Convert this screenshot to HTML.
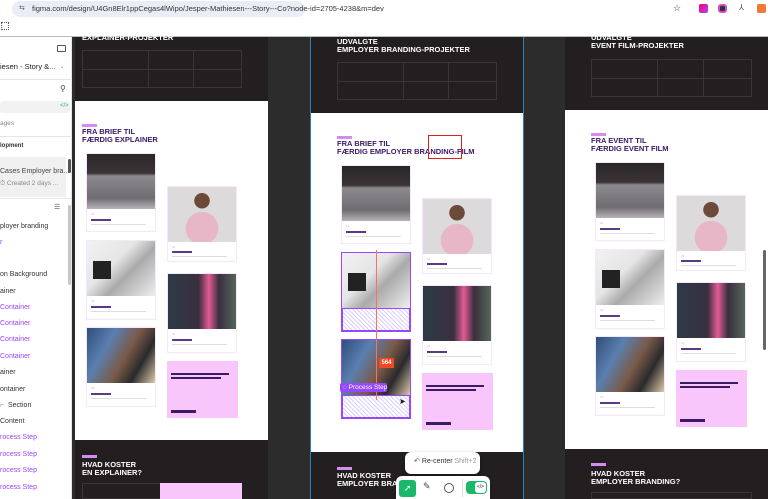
<!DOCTYPE html>
<html><head><meta charset="utf-8">
<style>
*{margin:0;padding:0;box-sizing:border-box}
body{width:768px;height:499px;overflow:hidden;position:relative;background:#2c2c2c;font-family:"Liberation Sans",sans-serif}
.a{position:absolute}
.lp div.t{position:absolute;left:0;font-size:7px;color:#333;white-space:nowrap}
.lp div.p{color:#9747ff}
.dk{background:#231f20}
.wh{background:#fff}
.tag{position:absolute;width:15px;height:3px;background:#d58cf0}
.ttl{position:absolute;font-weight:bold;font-size:7.5px;color:#3b1a66;line-height:8px;white-space:nowrap}
.card{position:absolute;width:70px;border:1px solid #f6e6fa;background:#fff}
.card .im{height:55px}
.card .n{position:absolute;left:4px;font-size:3px;color:#e6a6f5}
.card .h{position:absolute;left:4px;width:20px;height:1.5px;background:#5a3a86}
.card .l{position:absolute;left:4px;width:55px;height:1px;background:#ddd}
.pink{position:absolute;width:71px;height:57px;background:#f9c6fc}
.tbl{position:absolute;border:1px solid #3a3637;}
.ln{position:absolute;background:#3a3637}
.wt{position:absolute;color:#fff;font-weight:bold;font-size:7.5px;line-height:8px;white-space:nowrap}
</style></head><body>
<div class="a" style="left:0;top:0;width:768px;height:17px;background:#fff"></div>
<div class="a" style="left:12px;top:1px;width:293px;height:16px;border-radius:8px;background:#e9eef6"></div>
<div class="a" style="left:19px;top:4px;font-size:7px;color:#555">⇆</div>
<div class="a" style="left:32px;top:4px;font-size:7.5px;color:#333;white-space:nowrap">figma.com/design/U4Gn8Elr1ppCegas4lWipo/Jesper-Mathiesen---Story---Co?node-id=2705-4238&amp;m=dev</div>
<div class="a" style="left:673px;top:3px;font-size:9px;color:#444">☆</div>
<div class="a" style="left:699px;top:4px;width:9px;height:9px;background:linear-gradient(135deg,#f06,#a4f);border-radius:2px"></div>
<div class="a" style="left:718px;top:4px;width:9px;height:9px;border:2px solid #d34ccf;border-radius:3px;background:#333"></div>
<div class="a" style="left:739px;top:3px;font-size:8px;color:#555">⅄</div>
<div class="a" style="left:757px;top:4px;width:9px;height:9px;background:#f37835;border-radius:2px"></div>
<div class="a" style="left:0;top:17px;width:768px;height:20px;background:#fff;border-bottom:1px solid #bbb"></div>
<div class="a" style="left:1px;top:22px;width:8px;height:8px;border:1px dotted #555"></div>
<div class="a lp" style="left:0;top:37px;width:72px;height:462px;background:#fff;border-right:1px solid #e5e5e5">
  <div class="a" style="left:57px;top:8px;width:9px;height:7px;border:1px solid #555;border-radius:1px"></div>
  <div class="t" style="top:25px;font-size:7.5px;color:#222">iesen - Story &amp;...</div>
  <div class="a" style="left:60px;top:27px;font-size:5px;color:#666">⌄</div>
  <div class="a" style="left:0;top:42px;width:72px;height:1px;background:#e5e5e5"></div>
  <div class="a" style="left:60px;top:47px;font-size:8px;color:#444">⚲</div>
  <div class="a" style="left:0;top:64px;width:70px;height:12px;background:#f2f2f2;border-radius:3px"></div>
  <div class="a" style="left:60px;top:66px;font-size:6px;color:#1bb86a">&lt;/&gt;</div>
  <div class="t" style="top:83px;color:#888;font-size:6.5px">ages</div>
  <div class="a" style="left:0;top:99px;width:72px;height:1px;background:#e5e5e5"></div>
  <div class="t" style="top:106px;font-weight:bold;font-size:6px">lopment</div>
  <div class="a" style="left:0;top:120px;width:66px;height:40px;background:#f0f0f0"></div>
  <div class="t" style="top:131px;color:#444">Cases Employer bra...</div>
  <div class="t" style="top:143px;color:#888;font-size:6.5px">⏱ Created 2 days ...</div>
  <div class="a" style="left:68px;top:122px;width:3px;height:14px;background:#555;border-radius:2px"></div>
  <div class="a" style="left:0;top:161px;width:72px;height:1px;background:#e5e5e5"></div>
  <div class="a" style="left:54px;top:166px;font-size:7px;color:#555">☰</div>
  <div class="a" style="left:68px;top:168px;width:3px;height:80px;background:#c8c8c8;border-radius:2px"></div>
  <div class="t" style="top:186px">ployer branding</div>
  <div class="t p" style="top:202px">r</div>
  <div class="t" style="top:234px">on Background</div>
  <div class="t" style="top:251px">ainer</div>
  <div class="t p" style="top:267px">Container</div>
  <div class="t p" style="top:283px">Container</div>
  <div class="t p" style="top:299px">Container</div>
  <div class="t p" style="top:316px">Container</div>
  <div class="t" style="top:332px">ainer</div>
  <div class="t" style="top:349px">ontainer</div>
  <div class="t" style="top:365px;left:0"><span style="color:#888">⌐ </span>&nbsp;Section</div>
  <div class="t" style="top:381px">Content</div>
  <div class="t p" style="top:397px">rocess Step</div>
  <div class="t p" style="top:414px">rocess Step</div>
  <div class="t p" style="top:430px">rocess Step</div>
  <div class="t p" style="top:447px">rocess Step</div>
</div>

<div class="a dk" style="left:75px;top:37px;width:193px;height:64px"></div>
<div class="wt" style="left:82px;top:34px">EXPLAINER-PROJEKTER</div>
<div class="tbl" style="left:82px;top:50px;width:160px;height:38px"></div>
<div class="ln" style="left:148px;top:50px;width:1px;height:38px"></div>
<div class="ln" style="left:193px;top:50px;width:1px;height:38px"></div>
<div class="ln" style="left:82px;top:69px;width:160px;height:1px"></div>
<div class="a wh" style="left:75px;top:101px;width:193px;height:339px"></div>
<div class="a dk" style="left:75px;top:440px;width:193px;height:59px"></div>

<div class="a dk" style="left:311px;top:37px;width:212px;height:76px"></div>
<div class="wt" style="left:337px;top:38px">UDVALGTE<br>EMPLOYER BRANDING-PROJEKTER</div>
<div class="tbl" style="left:337px;top:62px;width:160px;height:38px"></div>
<div class="ln" style="left:403px;top:62px;width:1px;height:38px"></div>
<div class="ln" style="left:448px;top:62px;width:1px;height:38px"></div>
<div class="ln" style="left:337px;top:81px;width:160px;height:1px"></div>
<div class="a wh" style="left:311px;top:113px;width:212px;height:339px"></div>
<div class="a dk" style="left:311px;top:452px;width:212px;height:47px"></div>
<div class="a" style="left:310px;top:37px;width:1px;height:462px;background:#2d7fc1"></div>
<div class="a" style="left:523px;top:37px;width:1px;height:462px;background:#2d7fc1"></div>

<div class="a dk" style="left:565px;top:37px;width:203px;height:73px"></div>
<div class="wt" style="left:591px;top:34px">UDVALGTE<br>EVENT FILM-PROJEKTER</div>
<div class="tbl" style="left:591px;top:59px;width:161px;height:38px"></div>
<div class="ln" style="left:657px;top:59px;width:1px;height:38px"></div>
<div class="ln" style="left:703px;top:59px;width:1px;height:38px"></div>
<div class="ln" style="left:591px;top:78px;width:161px;height:1px"></div>
<div class="a wh" style="left:565px;top:110px;width:203px;height:339px"></div>
<div class="a dk" style="left:565px;top:449px;width:203px;height:50px"></div>
<div class="a" style="left:763px;top:250px;width:3px;height:100px;background:#666;border-radius:2px"></div>

<div class="a" style="left:82px;top:101px">
 <div class="tag" style="left:0;top:23px"></div>
 <div class="ttl" style="left:0;top:27px">FRA BRIEF TIL<br>FÆRDIG EXPLAINER</div>
 <div class="card" style="left:4px;top:52px;height:79px"><div class="im" style="background:linear-gradient(#2a2627 0,#3a3436 35%,#8d8a8e 40%,#6f6d72 80%,#b9b3b8)"></div><div class="n" style="top:58px">01</div><div class="h" style="top:65px"></div><div class="l" style="top:70px"></div></div>
 <div class="card" style="left:85px;top:85px;height:76px"><div class="im" style="background:radial-gradient(circle at 50% 75%,#e7b7c7 0 30%,transparent 31%),radial-gradient(circle at 50% 25%,#6b4a3a 0 14%,transparent 15%),#dcdadb"></div><div class="n" style="top:58px">02</div><div class="h" style="top:64px"></div><div class="l" style="top:69px"></div></div>
 <div class="card" style="left:4px;top:139px;height:80px"><div class="im" style="background:linear-gradient(135deg,#f2f2f2 0,#e5e5e5 40%,#aaa 60%,#eee);position:relative"><div class="a" style="left:6px;top:20px;width:18px;height:18px;background:#222"></div></div><div class="n" style="top:58px">03</div><div class="h" style="top:65px"></div><div class="l" style="top:70px"></div></div>
 <div class="card" style="left:85px;top:172px;height:80px"><div class="im" style="background:linear-gradient(90deg,#2c3a46 0,#3a2f3f 45%,#e25b95 60%,#3a2f3f 75%,#55675a)"></div><div class="n" style="top:58px">04</div><div class="h" style="top:65px"></div><div class="l" style="top:70px"></div></div>
 <div class="card" style="left:4px;top:226px;height:80px"><div class="im" style="background:linear-gradient(120deg,#2f4e7a 0,#5a7fb0 30%,#7a5a48 55%,#2a2a2c 75%,#e0c9a8)"></div><div class="n" style="top:58px">05</div><div class="h" style="top:65px"></div><div class="l" style="top:70px"></div></div>
 <div class="pink" style="left:85px;top:260px"><div class="a" style="left:4px;top:12px;width:58px;height:2px;background:#3b1a66"></div><div class="a" style="left:4px;top:16px;width:50px;height:2px;background:#3b1a66"></div><div class="a" style="left:4px;top:49px;width:25px;height:3px;background:#3b1a66"></div></div>
</div>

<div class="a" style="left:337px;top:113px">
 <div class="tag" style="left:0;top:23px"></div>
 <div class="ttl" style="left:0;top:27px">FRA BRIEF TIL<br>FÆRDIG EMPLOYER BRANDING-FILM</div>
 <div class="card" style="left:4px;top:52px;height:79px"><div class="im" style="background:linear-gradient(#2a2627 0,#3a3436 35%,#8d8a8e 40%,#6f6d72 80%,#b9b3b8)"></div><div class="n" style="top:58px">01</div><div class="h" style="top:65px"></div><div class="l" style="top:70px"></div></div>
 <div class="card" style="left:85px;top:85px;height:76px"><div class="im" style="background:radial-gradient(circle at 50% 75%,#e7b7c7 0 30%,transparent 31%),radial-gradient(circle at 50% 25%,#6b4a3a 0 14%,transparent 15%),#dcdadb"></div><div class="n" style="top:58px">02</div><div class="h" style="top:64px"></div><div class="l" style="top:69px"></div></div>
 <div class="card" style="left:4px;top:139px;height:80px;border:1px solid #9747ff"><div class="im" style="background:linear-gradient(135deg,#f2f2f2 0,#e5e5e5 40%,#aaa 60%,#eee);position:relative"><div class="a" style="left:6px;top:20px;width:18px;height:18px;background:#222"></div></div><div class="a" style="left:0;top:55px;width:68px;height:23px;background:repeating-linear-gradient(45deg,#d8d0ff 0 1px,#fff 1px 3px);border:1px solid #9747ff"></div></div>
 <div class="card" style="left:85px;top:172px;height:80px"><div class="im" style="background:linear-gradient(90deg,#2c3a46 0,#3a2f3f 45%,#e25b95 60%,#3a2f3f 75%,#55675a)"></div><div class="n" style="top:58px">04</div><div class="h" style="top:65px"></div><div class="l" style="top:70px"></div></div>
 <div class="card" style="left:4px;top:226px;height:80px;border:1px solid #9747ff"><div class="im" style="background:linear-gradient(120deg,#2f4e7a 0,#5a7fb0 30%,#7a5a48 55%,#2a2a2c 75%,#e0c9a8)"></div><div class="a" style="left:0;top:55px;width:68px;height:23px;background:repeating-linear-gradient(45deg,#d8d0ff 0 1px,#fff 1px 3px);border:1px solid #9747ff"></div></div>
 <div class="pink" style="left:85px;top:260px"><div class="a" style="left:4px;top:12px;width:58px;height:2px;background:#3b1a66"></div><div class="a" style="left:4px;top:16px;width:50px;height:2px;background:#3b1a66"></div><div class="a" style="left:4px;top:49px;width:25px;height:3px;background:#3b1a66"></div></div>
</div>

<div class="a" style="left:591px;top:110px">
 <div class="tag" style="left:0;top:23px"></div>
 <div class="ttl" style="left:0;top:27px">FRA EVENT TIL<br>FÆRDIG EVENT FILM</div>
 <div class="card" style="left:4px;top:52px;height:79px"><div class="im" style="background:linear-gradient(#2a2627 0,#3a3436 35%,#8d8a8e 40%,#6f6d72 80%,#b9b3b8)"></div><div class="n" style="top:58px">01</div><div class="h" style="top:65px"></div><div class="l" style="top:70px"></div></div>
 <div class="card" style="left:85px;top:85px;height:76px"><div class="im" style="background:radial-gradient(circle at 50% 75%,#e7b7c7 0 30%,transparent 31%),radial-gradient(circle at 50% 25%,#6b4a3a 0 14%,transparent 15%),#dcdadb"></div><div class="n" style="top:58px">02</div><div class="h" style="top:64px"></div><div class="l" style="top:69px"></div></div>
 <div class="card" style="left:4px;top:139px;height:80px"><div class="im" style="background:linear-gradient(135deg,#f2f2f2 0,#e5e5e5 40%,#aaa 60%,#eee);position:relative"><div class="a" style="left:6px;top:20px;width:18px;height:18px;background:#222"></div></div><div class="n" style="top:58px">03</div><div class="h" style="top:65px"></div><div class="l" style="top:70px"></div></div>
 <div class="card" style="left:85px;top:172px;height:80px"><div class="im" style="background:linear-gradient(90deg,#2c3a46 0,#3a2f3f 45%,#e25b95 60%,#3a2f3f 75%,#55675a)"></div><div class="n" style="top:58px">04</div><div class="h" style="top:65px"></div><div class="l" style="top:70px"></div></div>
 <div class="card" style="left:4px;top:226px;height:80px"><div class="im" style="background:linear-gradient(120deg,#2f4e7a 0,#5a7fb0 30%,#7a5a48 55%,#2a2a2c 75%,#e0c9a8)"></div><div class="n" style="top:58px">05</div><div class="h" style="top:65px"></div><div class="l" style="top:70px"></div></div>
 <div class="pink" style="left:85px;top:260px"><div class="a" style="left:4px;top:12px;width:58px;height:2px;background:#3b1a66"></div><div class="a" style="left:4px;top:16px;width:50px;height:2px;background:#3b1a66"></div><div class="a" style="left:4px;top:49px;width:25px;height:3px;background:#3b1a66"></div></div>
</div>

<div class="tag" style="left:82px;top:455px"></div>
<div class="wt" style="left:82px;top:461px">HVAD KOSTER<br>EN EXPLAINER?</div>
<div class="a" style="left:82px;top:483px;width:160px;height:16px;border:1px solid #3a3637"></div>
<div class="a" style="left:160px;top:483px;width:82px;height:16px;background:#f9c6fc"></div>
<div class="tag" style="left:337px;top:467px"></div>
<div class="wt" style="left:337px;top:472px">HVAD KOSTER<br>EMPLOYER BRANDING</div>
<div class="tag" style="left:591px;top:463px"></div>
<div class="wt" style="left:591px;top:470px">HVAD KOSTER<br>EMPLOYER BRANDING?</div>
<div class="a" style="left:591px;top:492px;width:161px;height:7px;border:1px solid #3a3637"></div>

<div class="a" style="left:428px;top:135px;width:34px;height:24px;border:1.5px solid #e0201b"></div>
<div class="a" style="left:376px;top:250px;width:1px;height:150px;background:#f47260"></div>
<div class="a" style="left:379px;top:358px;width:15px;height:10px;background:#f24822;color:#fff;font-size:6px;font-weight:bold;text-align:center;line-height:10px">564</div>
<div class="a" style="left:340px;top:383px;width:47px;height:9px;background:#9747ff;border-radius:2px;color:#fff;font-size:6.5px;line-height:9px;padding-left:3px;white-space:nowrap">◌ Process Step</div>
<div class="a" style="left:399px;top:397px;font-size:8px;color:#111">➤</div>
<div class="a" style="left:405px;top:452px;width:75px;height:22px;background:#fff;border-radius:6px;box-shadow:0 1px 3px rgba(0,0,0,.3)"></div>
<div class="a" style="left:414px;top:457px;font-size:7px;color:#555;white-space:nowrap">↶ <span style="color:#333">Re-center</span> <span style="color:#999">Shift+2</span></div>
<div class="a" style="left:396px;top:476px;width:94px;height:23px;background:#fff;border-radius:6px 6px 0 0;box-shadow:0 1px 3px rgba(0,0,0,.3)"></div>
<div class="a" style="left:399px;top:480px;width:17px;height:17px;background:#1bb86a;border-radius:3px;color:#fff;font-size:9px;text-align:center;line-height:17px">➚</div>
<div class="a" style="left:423px;top:481px;font-size:9px;color:#444">✎</div>
<div class="a" style="left:444px;top:483px;width:10px;height:10px;border:1px solid #555;border-radius:50%"></div>
<div class="a" style="left:462px;top:479px;width:1px;height:18px;background:#ddd"></div>
<div class="a" style="left:466px;top:481px;width:21px;height:13px;background:#1bb86a;border-radius:4px"></div>
<div class="a" style="left:475px;top:482px;width:11px;height:11px;background:#fff;border-radius:3px;font-size:5px;color:#333;text-align:center;line-height:11px">&lt;/&gt;</div>
</body></html>
